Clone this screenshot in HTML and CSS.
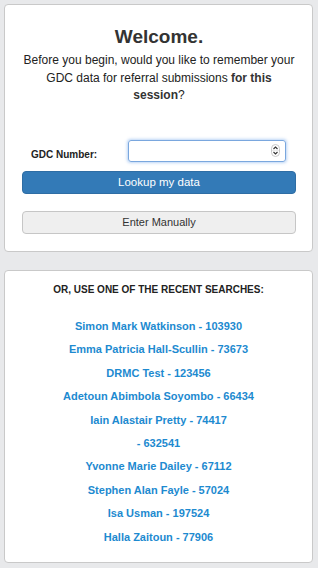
FILE: index.html
```html
<!DOCTYPE html>
<html>
<head>
<meta charset="utf-8">
<link rel="stylesheet" href="styles.css">
</head>
<body>
<div class="page">
  <section class="card welcome">
    <h1 class="title">Welcome.</h1>
    <p class="intro">Before you begin, would you like to remember your<br>GDC data for referral submissions <b>for this</b><br><b>session</b>?</p>
    <div class="form-row">
      <label class="label">GDC Number:</label>
      <div class="input">
        <span class="spin">
          <svg width="9" height="13" viewBox="0 0 9 13"><rect x="0.5" y="0.5" width="8" height="12" rx="4" fill="#fff" stroke="#c8c8c8"/><path d="M2.5 5 L4.5 3 L6.5 5" fill="none" stroke="#333" stroke-width="1.1"/><path d="M2.5 8 L4.5 10 L6.5 8" fill="none" stroke="#333" stroke-width="1.1"/><line x1="1" y1="6.5" x2="8" y2="6.5" stroke="#ddd" stroke-width="0.6"/></svg>
        </span>
      </div>
    </div>
    <button class="btn btn-primary">Lookup my data</button>
    <button class="btn btn-default">Enter Manually</button>
  </section>
  <section class="card recent">
    <h2 class="heading">OR, USE ONE OF THE RECENT SEARCHES:</h2>
    <ul class="list">
      <li><a class="link">Simon Mark Watkinson - 103930</a></li>
      <li><a class="link">Emma Patricia Hall-Scullin - 73673</a></li>
      <li><a class="link">DRMC Test - 123456</a></li>
      <li><a class="link">Adetoun Abimbola Soyombo - 66434</a></li>
      <li><a class="link">Iain Alastair Pretty - 74417</a></li>
      <li><a class="link">- 632541</a></li>
      <li><a class="link">Yvonne Marie Dailey - 67112</a></li>
      <li><a class="link">Stephen Alan Fayle - 57024</a></li>
      <li><a class="link">Isa Usman - 197524</a></li>
      <li><a class="link">Halla Zaitoun - 77906</a></li>
    </ul>
  </section>
</div>
</body>
</html>
```
FILE: styles.css
```css
html, body {
  margin: 0;
  padding: 0;
  background: #e8e9eb;
  font-family: "Liberation Sans", Arial, sans-serif;
  color: #333;
}
.page {
  display: flex;
  flex-direction: column;
  gap: 18px;
  padding: 4px 5px 0 4px;
}
.card {
  background: #fff;
  border: 1px solid #c9c9c9;
  border-radius: 4px;
  box-sizing: border-box;
}
.welcome {
  height: 248px;
  padding: 21px 16px 0 17px;
  display: flex;
  flex-direction: column;
}
.title {
  margin: 0;
  font-size: 19px;
  line-height: 22px;
  font-weight: bold;
  text-align: center;
  color: #333;
}
.intro {
  margin: 4px 0 0;
  font-size: 12px;
  line-height: 17.5px;
  text-align: center;
  color: #222;
}
.intro b { font-weight: bold; color: #333; }
.form-row {
  display: flex;
  align-items: flex-start;
  margin-top: 35px;
  padding: 0 10px 0 9px;
}
.label {
  font-size: 10px;
  line-height: 12px;
  font-weight: bold;
  padding-top: 9px;
  width: 97px;
  color: #222;
}
.input {
  flex: 1;
  height: 22px;
  box-sizing: border-box;
  border: 1px solid #7aa7de;
  border-radius: 3px;
  box-shadow: 0 0 3px 1px rgba(102, 160, 233, 0.45);
  display: flex;
  justify-content: flex-end;
  align-items: center;
  padding-right: 5px;
}
.spin { display: flex; }
.btn {
  display: block;
  width: 100%;
  box-sizing: border-box;
  font-family: "Liberation Sans", Arial, sans-serif;
  font-size: 11px;
  border-radius: 4px;
  padding: 0;
}
.btn-primary {
  margin-top: 9px;
  height: 23px;
  background: #337ab7;
  border: 1px solid #2e6da4;
  color: #fff;
  font-size: 11.5px;
}
.btn-default {
  margin-top: 17px;
  height: 23px;
  background: #efefef;
  border: 1px solid #c6c6c6;
  color: #333;
}
.recent {
  height: 293px;
  padding-top: 13px;
}
.heading {
  margin: 0;
  font-size: 10px;
  line-height: 12px;
  font-weight: bold;
  text-align: center;
  color: #222;
}
.list {
  list-style: none;
  margin: 23px 0 0;
  padding: 0;
  display: flex;
  flex-direction: column;
  gap: 8px;
}
.list li {
  text-align: center;
  font-size: 11px;
  line-height: 15.4px;
}
.link {
  font-size: 11px;
  font-weight: bold;
  color: #1d8ad0;
  text-decoration: none;
}
```
